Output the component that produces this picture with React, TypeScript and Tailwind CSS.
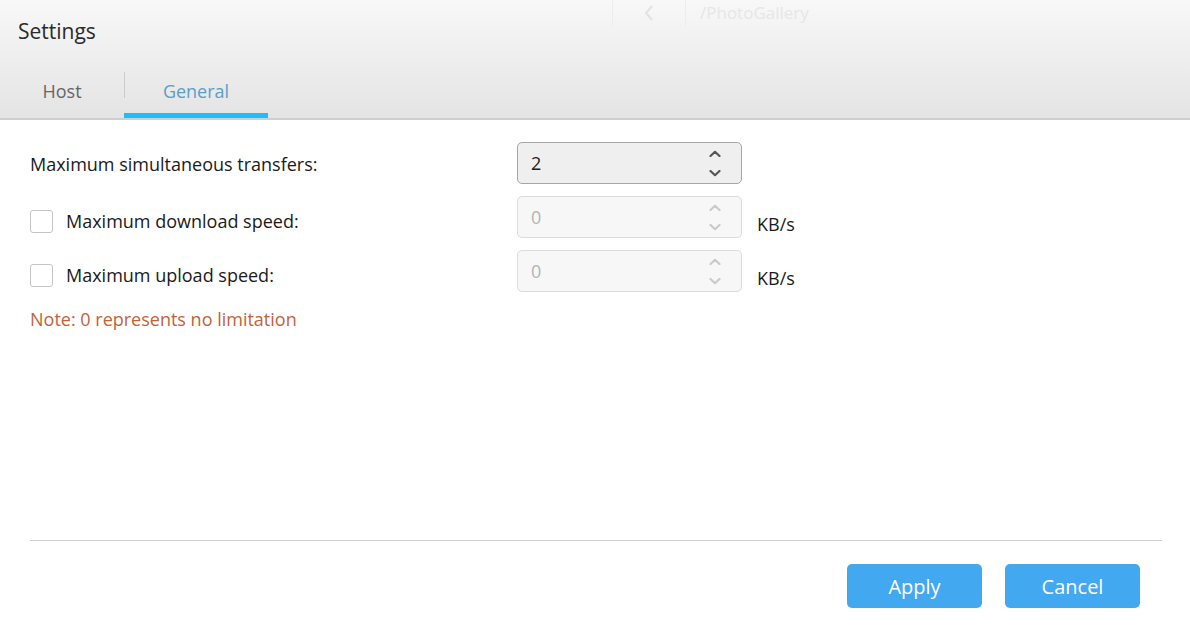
import React from "react";

const font = { fontFamily: '"Open Sans", "Noto Sans", sans-serif' };

function Chevrons({ disabled }: { disabled?: boolean }) {
  const c = disabled ? "#cacaca" : "#555555";
  return (
    <div className="flex flex-col items-center gap-[13px]">
      <svg width="12" height="7" viewBox="0 0 12 7">
        <path d="M1.5 6 L6 1.8 L10.5 6" fill="none" stroke={c} strokeWidth="2.2" strokeLinecap="round" strokeLinejoin="round" />
      </svg>
      <svg width="12" height="7" viewBox="0 0 12 7">
        <path d="M1.5 1 L6 5.2 L10.5 1" fill="none" stroke={c} strokeWidth="2.2" strokeLinecap="round" strokeLinejoin="round" />
      </svg>
    </div>
  );
}

function Spin({ value, disabled }: { value: string; disabled?: boolean }) {
  return (
    <div
      className={
        "w-[225px] h-[42px] rounded-[5px] border flex items-center justify-between pl-[13px] pr-[20px] " +
        (disabled ? "bg-[#f7f7f7] border-[#dcdcdc] text-[#b4b4b4]" : "bg-[#efefef] border-[#a6a6a6] text-[#222]")
      }
    >
      <span className="text-[18px]">{value}</span>
      <Chevrons disabled={disabled} />
    </div>
  );
}

export default function App() {
  return (
    <div className="w-[1190px] h-[630px] bg-white flex flex-col overflow-hidden" style={font}>
      <div className="h-[120px] bg-gradient-to-b from-[#f8f8f8] to-[#e4e4e4] border-b-2 border-[#cfcfcf] relative flex flex-col">
        <div className="absolute left-[612px] top-0 h-[26px] flex items-center text-[#e6e6e6] text-[17px]">
          <div className="w-[74px] h-[26px] border-l border-r border-[#ededed] flex items-center justify-center">
            <svg width="10" height="16" viewBox="0 0 10 16">
              <path d="M8 1 L2 8 L8 15" fill="none" stroke="#e2e2e2" strokeWidth="2" />
            </svg>
          </div>
          <span className="ml-[14px]">/PhotoGallery</span>
        </div>
        <div className="pl-[18px] pt-[16px] text-[21px] text-[#2a2a2a] leading-[30px]">Settings</div>
        <div className="mt-auto flex items-end h-[46px]">
          <div className="w-[124px] h-full flex items-center justify-center text-[18px] text-[#666] pb-[8px]">Host</div>
          <div className="w-px h-[26px] bg-[#cccccc] self-start" />
          <div className="w-[144px] h-full flex flex-col -ml-px">
            <div className="flex-1 flex items-center justify-center text-[18px] text-[#5b9ec4] pb-[3px]">General</div>
            <div className="h-[5px] bg-[#1ebdfd]" />
          </div>
        </div>
      </div>

      <div className="flex-1 flex flex-col px-[30px] text-[18px] text-[#1a1a1a]">
        <div className="flex items-center mt-[22px] h-[42px]">
          <div className="w-[487px] pt-[2px]">Maximum simultaneous transfers:</div>
          <Spin value="2" />
        </div>
        <div className="flex items-center mt-[12px] h-[42px]">
          <div className="w-[487px] flex items-center mt-[8px]">
            <div className="w-[23px] h-[23px] border border-[#c4c4c4] rounded-[3px] bg-white mr-[13px]" />
            <span className="pt-[1px]">Maximum download speed:</span>
          </div>
          <Spin value="0" disabled />
          <span className="ml-[15px] mt-[14px]">KB/s</span>
        </div>
        <div className="flex items-center mt-[12px] h-[42px]">
          <div className="w-[487px] flex items-center mt-[8px]">
            <div className="w-[23px] h-[23px] border border-[#c4c4c4] rounded-[3px] bg-white mr-[13px]" />
            <span className="pt-[1px]">Maximum upload speed:</span>
          </div>
          <Spin value="0" disabled />
          <span className="ml-[15px] mt-[14px]">KB/s</span>
        </div>
        <div className="mt-[14px] text-[#c2623a]">Note: 0 represents no limitation</div>

        <div className="mt-auto border-t border-[#d0d0d0] mr-[-2px]" />
        <div className="flex justify-end gap-[23px] pt-[23px] pb-[22px] pr-[20px]">
          <button className="w-[135px] h-[44px] rounded-[5px] bg-[#42a8f0] text-white text-[20px] pt-[2px]">Apply</button>
          <button className="w-[135px] h-[44px] rounded-[5px] bg-[#42a8f0] text-white text-[20px] pt-[2px]">Cancel</button>
        </div>
      </div>
    </div>
  );
}
